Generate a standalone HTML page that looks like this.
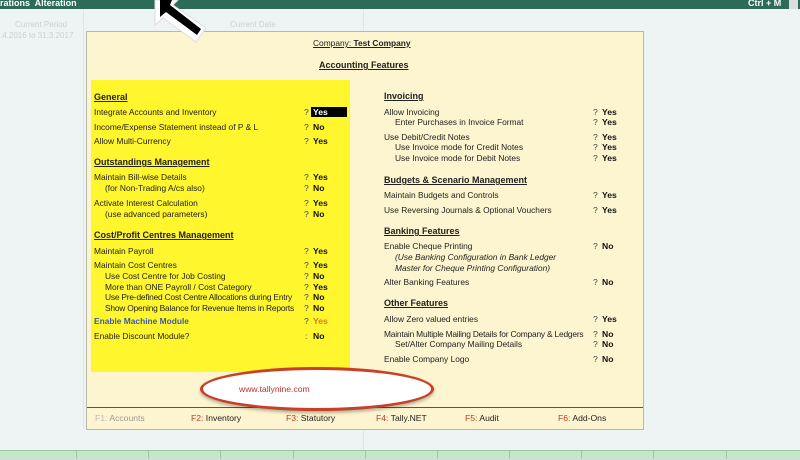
<!DOCTYPE html>
<html><head><meta charset="utf-8"><style>
body{margin:0;width:800px;height:459px;overflow:hidden;background:#eef4f4;font-family:"Liberation Sans",sans-serif;position:relative}
div,span{position:absolute;white-space:nowrap}
.t{font-size:8.4px;color:#222}
.n{letter-spacing:-0.2px}
.h{font-size:9px;font-weight:bold;text-decoration:underline;color:#222}
.q{font-size:8.6px;color:#444}
.v{font-size:8.6px;font-weight:bold;color:#111}
.f{font-size:8.6px;color:#222;top:413px}
.f b{color:#c0392b;font-weight:normal}
</style></head><body>
<div style="left:0;top:0;width:800px;height:9px;background:#2d6a58"></div>
<div style="left:0;top:-2px;font-size:9px;font-weight:bold;color:#fff">rations&nbsp; Alteration</div>
<div style="left:748px;top:-2px;font-size:9px;font-weight:bold;color:#fff">Ctrl + M</div>
<div style="left:789px;top:0;width:9px;height:9px;background:#ddd"></div>
<div style="left:83px;top:9px;width:1px;height:420px;background:#dde6e6"></div>
<div style="left:363px;top:9px;width:1px;height:22px;background:#dde6e6"></div>
<div style="left:363px;top:429px;width:1px;height:21px;background:#dde6e6"></div>
<div style="left:15px;top:20px;font-size:8px;color:#c8d0d0">Current Period</div>
<div style="left:0;top:31px;font-size:8px;color:#c8d0d0">.4.2016 to 31.3.2017</div>
<div style="left:230px;top:20px;font-size:8px;color:#c8d0d0">Current Date</div>

<div style="left:86px;top:31px;width:556px;height:397px;background:#fdf5cf;border:1px solid #b8b8a8"></div>
<div style="left:91px;top:80px;width:259px;height:292px;background:#fff62e"></div>
<div style="left:87px;top:407px;width:556px;height:1px;background:#555"></div>

<div class="t" style="left:313px;top:38px;text-decoration:underline">Company: <b>Test Company</b></div>
<div class="h" style="left:319px;top:60px">Accounting Features</div>

<div class="h" style="left:94px;top:92px">General</div>
<div class="t" style="left:94px;top:107px">Integrate Accounts and Inventory</div><div class="q" style="left:304px;top:107px">?</div><div style="left:311px;top:107px;width:36px;height:10px;background:#000"></div><div class="v" style="left:313px;top:107px;color:#fff">Yes</div>
<div class="t" style="left:94px;top:122px">Income/Expense Statement instead of P &amp; L</div><div class="q" style="left:304px;top:122px">?</div><div class="v" style="left:313px;top:122px">No</div>
<div class="t" style="left:94px;top:136px">Allow Multi-Currency</div><div class="q" style="left:304px;top:136px">?</div><div class="v" style="left:313px;top:136px">Yes</div>
<div class="h" style="left:94px;top:157px">Outstandings Management</div>
<div class="t" style="left:94px;top:172px">Maintain Bill-wise Details</div><div class="q" style="left:304px;top:172px">?</div><div class="v" style="left:313px;top:172px">Yes</div>
<div class="t" style="left:105px;top:183px">(for Non-Trading A/cs also)</div><div class="q" style="left:304px;top:183px">?</div><div class="v" style="left:313px;top:183px">No</div>
<div class="t" style="left:94px;top:198px">Activate Interest Calculation</div><div class="q" style="left:304px;top:198px">?</div><div class="v" style="left:313px;top:198px">Yes</div>
<div class="t" style="left:105px;top:209px">(use advanced parameters)</div><div class="q" style="left:304px;top:209px">?</div><div class="v" style="left:313px;top:209px">No</div>
<div class="h" style="left:94px;top:230px">Cost/Profit Centres Management</div>
<div class="t" style="left:94px;top:246px">Maintain Payroll</div><div class="q" style="left:304px;top:246px">?</div><div class="v" style="left:313px;top:246px">Yes</div>
<div class="t" style="left:94px;top:260px">Maintain Cost Centres</div><div class="q" style="left:304px;top:260px">?</div><div class="v" style="left:313px;top:260px">Yes</div>
<div class="t" style="left:105px;top:271px">Use Cost Centre for Job Costing</div><div class="q" style="left:304px;top:271px">?</div><div class="v" style="left:313px;top:271px">No</div>
<div class="t" style="left:105px;top:282px">More than ONE Payroll / Cost Category</div><div class="q" style="left:304px;top:282px">?</div><div class="v" style="left:313px;top:282px">Yes</div>
<div class="t n" style="left:105px;top:292px">Use Pre-defined Cost Centre Allocations during Entry</div><div class="q" style="left:304px;top:292px">?</div><div class="v" style="left:313px;top:292px">No</div>
<div class="t n" style="left:105px;top:303px">Show Opening Balance for Revenue Items in Reports</div><div class="q" style="left:304px;top:303px">?</div><div class="v" style="left:313px;top:303px">No</div>
<div class="t" style="left:94px;top:316px;font-weight:bold;color:#3b5aa8">Enable Machine Module</div><div class="q" style="left:304px;top:316px">?</div><div class="v" style="left:313px;top:316px;color:#d08020">Yes</div>
<div class="t" style="left:94px;top:331px">Enable Discount Module?</div><div class="q" style="left:305px;top:331px">:</div><div class="v" style="left:313px;top:331px">No</div>

<div class="h" style="left:384px;top:91px">Invoicing</div>
<div class="t" style="left:384px;top:107px">Allow Invoicing</div><div class="q" style="left:593px;top:107px">?</div><div class="v" style="left:602px;top:107px">Yes</div>
<div class="t" style="left:395px;top:117px">Enter Purchases in Invoice Format</div><div class="q" style="left:593px;top:117px">?</div><div class="v" style="left:602px;top:117px">Yes</div>
<div class="t" style="left:384px;top:132px">Use Debit/Credit Notes</div><div class="q" style="left:593px;top:132px">?</div><div class="v" style="left:602px;top:132px">Yes</div>
<div class="t" style="left:395px;top:142px">Use Invoice mode for Credit Notes</div><div class="q" style="left:593px;top:142px">?</div><div class="v" style="left:602px;top:142px">Yes</div>
<div class="t" style="left:395px;top:153px">Use Invoice mode for Debit Notes</div><div class="q" style="left:593px;top:153px">?</div><div class="v" style="left:602px;top:153px">Yes</div>
<div class="h" style="left:384px;top:175px">Budgets &amp; Scenario Management</div>
<div class="t" style="left:384px;top:190px">Maintain Budgets and Controls</div><div class="q" style="left:593px;top:190px">?</div><div class="v" style="left:602px;top:190px">Yes</div>
<div class="t" style="left:384px;top:205px">Use Reversing Journals &amp; Optional Vouchers</div><div class="q" style="left:593px;top:205px">?</div><div class="v" style="left:602px;top:205px">Yes</div>
<div class="h" style="left:384px;top:226px">Banking Features</div>
<div class="t" style="left:384px;top:241px">Enable Cheque Printing</div><div class="q" style="left:593px;top:241px">?</div><div class="v" style="left:602px;top:241px">No</div>
<div class="t" style="left:395px;top:252px;font-style:italic">(Use Banking Configuration in Bank Ledger</div>
<div class="t" style="left:395px;top:263px;font-style:italic">Master for Cheque Printing Configuration)</div>
<div class="t" style="left:384px;top:277px">Alter Banking Features</div><div class="q" style="left:593px;top:277px">?</div><div class="v" style="left:602px;top:277px">No</div>
<div class="h" style="left:384px;top:298px">Other Features</div>
<div class="t" style="left:384px;top:314px">Allow Zero valued entries</div><div class="q" style="left:593px;top:314px">?</div><div class="v" style="left:602px;top:314px">Yes</div>
<div class="t n" style="left:384px;top:329px">Maintain Multiple Mailing Details for Company &amp; Ledgers</div><div class="q" style="left:593px;top:329px">?</div><div class="v" style="left:602px;top:329px">No</div>
<div class="t" style="left:395px;top:339px">Set/Alter Company Mailing Details</div><div class="q" style="left:593px;top:339px">?</div><div class="v" style="left:602px;top:339px">No</div>
<div class="t" style="left:384px;top:354px">Enable Company Logo</div><div class="q" style="left:593px;top:354px">?</div><div class="v" style="left:602px;top:354px">No</div>

<div style="left:200px;top:367px;width:228px;height:38px;border:3px solid #c8402a;border-radius:50%;background:#fff;box-shadow:0 2px 3px rgba(0,0,0,.3)"></div>
<div style="left:239px;top:384px;font-size:8.6px;color:#c03030">www.tallynine.com</div>

<div class="f" style="left:95px;color:#999"><b style="color:#bbb">F1:</b> Accounts</div>
<div class="f" style="left:191px"><b>F2:</b> Inventory</div>
<div class="f" style="left:286px"><b>F3:</b> Statutory</div>
<div class="f" style="left:376px"><b>F4:</b> Tally.NET</div>
<div class="f" style="left:465px"><b>F5:</b> Audit</div>
<div class="f" style="left:558px"><b>F6:</b> Add-Ons</div>

<div style="left:0;top:450px;width:800px;height:9px;background:#c6e6cc;border-top:1px solid #9cc4a4"></div>
<div style="left:76px;top:450px;width:1px;height:9px;background:#9cc4a4"></div>
<div style="left:148px;top:450px;width:1px;height:9px;background:#9cc4a4"></div>
<div style="left:220px;top:450px;width:1px;height:9px;background:#9cc4a4"></div>
<div style="left:293px;top:450px;width:1px;height:9px;background:#9cc4a4"></div>
<div style="left:365px;top:450px;width:1px;height:9px;background:#9cc4a4"></div>
<div style="left:437px;top:450px;width:1px;height:9px;background:#9cc4a4"></div>
<div style="left:509px;top:450px;width:1px;height:9px;background:#9cc4a4"></div>
<div style="left:581px;top:450px;width:1px;height:9px;background:#9cc4a4"></div>
<div style="left:653px;top:450px;width:1px;height:9px;background:#9cc4a4"></div>
<div style="left:726px;top:450px;width:1px;height:9px;background:#9cc4a4"></div>

<svg style="position:absolute;left:150px;top:0" width="70" height="45" viewBox="0 0 70 45">
<polygon points="5,0 5,25 13,18 46,42 56,28 23,5 28,0" fill="#fff" stroke="#ddd" stroke-width="1"/>
<polygon points="10,0 10,17 16,12 47,35 51,29 20,5 22,0" fill="#000"/>
</svg>
</body></html>
